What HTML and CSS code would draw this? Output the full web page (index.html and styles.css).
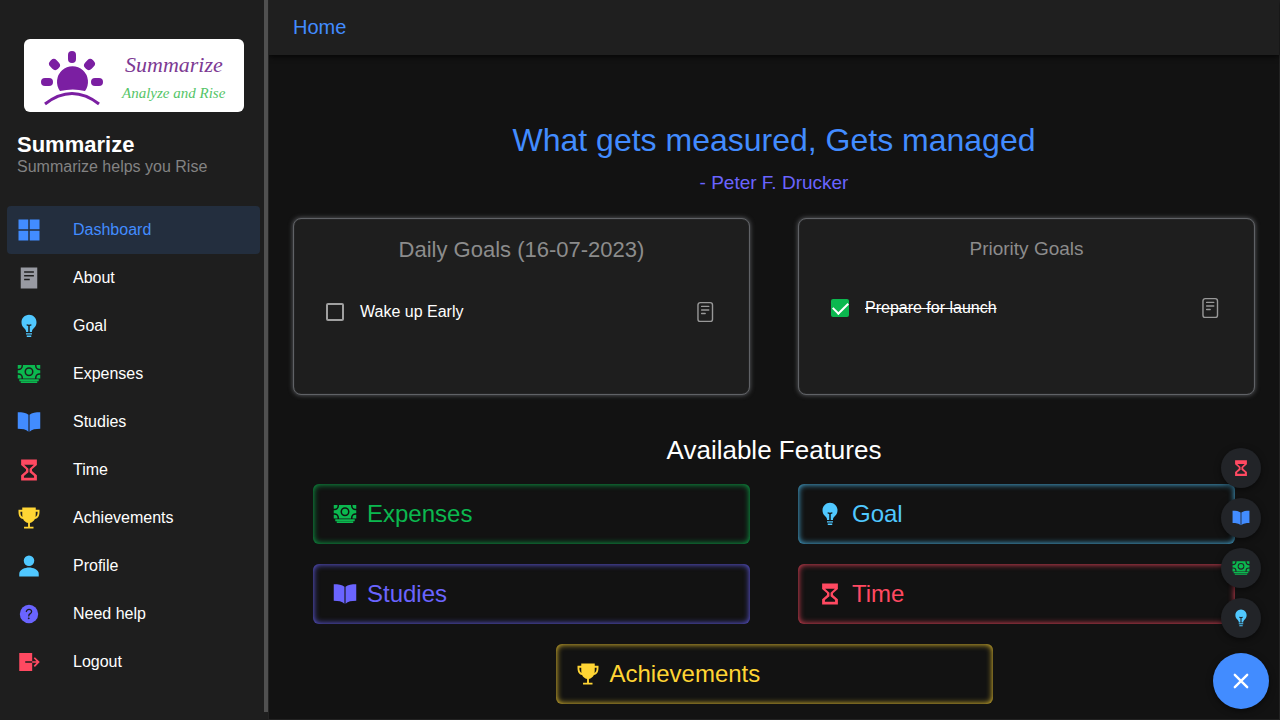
FILE: index.html
```html
<!DOCTYPE html>
<html lang="en">
<head>
<meta charset="utf-8">
<meta name="viewport" content="width=device-width, initial-scale=1">
<title>Summarize</title>
<link rel="stylesheet" href="styles.css">
</head>
<body>
<svg class="sprite" aria-hidden="true">
  <symbol id="grid" viewBox="0 0 512 512"><path d="M32 32h208v208H32zM272 32h208v208H272zM32 272h208v208H32zM272 272h208v208H272z"/></symbol>
  <symbol id="reader" viewBox="0 0 512 512"><path fill-rule="evenodd" d="M80 32h352v448H80zM152 112v32h208v-32zM152 192v32h208v-32zM152 272v32h120v-32z"/></symbol>
  <symbol id="note" viewBox="0 0 512 512"><g fill="none" stroke="currentColor" stroke-width="30" stroke-linecap="round"><rect x="106" y="56" width="310" height="400" rx="48"/><path d="M184 136h152M184 212h152M184 288h76"/></g></symbol>
  <symbol id="bulb" viewBox="0 0 512 512"><path fill-rule="evenodd" d="M256 16C165 18 96 88 96 175c0 52 20 87 49 119 27 30 47 50 47 74v16h48V256l-36-10 4-28 48 12 48-12 4 28-36 10v128h48v-16c0-24 20-44 47-74 29-32 49-67 49-119C416 87 347 18 256 16z"/><path d="M192 408h128v28H192zM208 460h96v32h-96z"/></symbol>
  <symbol id="cash" viewBox="0 0 512 512"><path d="M48 368h416v40H48zM80 416h352v32H80zM32 272H16v80h80v-16a64 64 0 0 0-64-64zM480 240h16v-64h-16a96 96 0 0 1-96-96V64H128v16a96 96 0 0 1-96 96H16v64h16a96 96 0 0 1 96 96v16h256v-16a96 96 0 0 1 96-96zm-224 64a96 96 0 1 1 96-96 96 96 0 0 1-96 96zM416 336v16h80v-80h-16a64 64 0 0 0-64 64zM480 144h16V64h-80v16a64 64 0 0 0 64 64zM96 80V64H16v80h16a64 64 0 0 0 64-64z"/><circle cx="256" cy="208" r="64"/></symbol>
  <symbol id="book" viewBox="0 0 512 512"><path d="M16 48c98 0 180 9 228 54v360c-50-49-130-62-228-62zM496 48c-98 0-180 9-228 54v360c50-49 130-62 228-62z"/></symbol>
  <symbol id="hourglass" viewBox="0 0 512 512"><path fill-rule="evenodd" d="M88 32h336v116l-104 92v36l104 92v112H88V368l104-92v-36L88 148zM152 144l92 84v76L148 384v36h216v-36l-96-80v-76l92-84z"/></symbol>
  <symbol id="trophy" viewBox="0 0 512 512"><path fill-rule="evenodd" d="M112 32h288v48h80v40c0 86-30 144-98 158-22 42-62 74-106 83v83h76v36H150v-36h86v-83c-48-9-88-41-106-83-68-14-98-72-98-158V80h80zM112 120H72c0 54 12 90 44 112-4-38-4-70-4-112zM400 120c0 42 0 74-4 112 32-22 44-58 44-112z"/></symbol>
  <symbol id="person" viewBox="0 0 512 512"><circle cx="256" cy="144" r="112"/><path d="M256 288c-82 0-208 42-208 136v56h416v-56c0-94-126-136-208-136z"/></symbol>
  <symbol id="help" viewBox="0 0 512 512"><circle cx="256" cy="256" r="196"/><g class="cut"><path d="M200 202s1-17 20-32c11-9 24-12 36-12 11 0 21 2 27 5 10 4 29 16 29 41 0 26-17 38-36 50s-25 28-25 42" fill="none" stroke-width="28" stroke-linecap="round"/><circle cx="250" cy="348" r="8" stroke-width="24"/></g></symbol>
  <symbol id="exit" viewBox="0 0 512 512"><path d="M48 64h276v174H176v36h148v174H48zM324 238h92l-60-60 26-26 104 104-104 104-26-26 60-60h-92z"/></symbol>
  <symbol id="close" viewBox="0 0 512 512"><path d="M124 124l264 264M388 124L124 388" fill="none" stroke="currentColor" stroke-width="50" stroke-linecap="round"/></symbol>
</svg>
<div class="app">
  <aside class="sidebar">
    <div class="sidebar-content">
      <svg class="logo" viewBox="0 0 220 73" role="img" aria-label="Summarize, Analyze and Rise">
        <g fill="#7b1fa2">
          <path d="M36 52a15.500 15.500 0 1 1 25 0q-12-3-25 0z"/>
          <rect x="44" y="12" width="8" height="12" rx="4"/>
          <rect x="17" y="39" width="12" height="8" rx="4"/>
          <rect x="67" y="39" width="12" height="8" rx="4"/>
          <rect x="26" y="20" width="9" height="11" rx="4" transform="rotate(-45 30.500 25.500)"/>
          <rect x="61" y="20" width="9" height="11" rx="4" transform="rotate(45 65.500 25.500)"/>
        </g>
        <path d="M21 65q27-21 54 0" fill="none" stroke="#7b1fa2" stroke-width="3"/>
        <text class="logo-name" x="101" y="33">Summarize</text>
        <text class="logo-tag" x="98" y="59">Analyze and Rise</text>
      </svg>
      <h2 class="brand">Summarize</h2>
      <p class="brand-note">Summarize helps you Rise</p>
      <nav class="menu">
        <a class="item active" href="#"><svg class="icon blue"><use href="#grid"/></svg>Dashboard</a>
        <a class="item" href="#"><svg class="icon gray"><use href="#reader"/></svg>About</a>
        <a class="item" href="#"><svg class="icon sky"><use href="#bulb"/></svg>Goal</a>
        <a class="item" href="#"><svg class="icon green"><use href="#cash"/></svg>Expenses</a>
        <a class="item" href="#"><svg class="icon blue"><use href="#book"/></svg>Studies</a>
        <a class="item" href="#"><svg class="icon red"><use href="#hourglass"/></svg>Time</a>
        <a class="item" href="#"><svg class="icon yellow"><use href="#trophy"/></svg>Achievements</a>
        <a class="item" href="#"><svg class="icon sky"><use href="#person"/></svg>Profile</a>
        <a class="item" href="#"><svg class="icon violet"><use href="#help"/></svg>Need help</a>
        <a class="item" href="#"><svg class="icon red"><use href="#exit"/></svg>Logout</a>
      </nav>
    </div>
    <div class="scroll-thumb"></div>
  </aside>
  <div class="page">
    <header class="toolbar"><h1 class="page-title">Home</h1></header>
    <main class="content">
      <h2 class="quote">What gets measured, Gets managed</h2>
      <p class="author">- Peter F. Drucker</p>
      <div class="goals">
        <section class="card">
          <h3 class="card-title large">Daily Goals (16-07-2023)</h3>
          <div class="goal">
            <input class="check" type="checkbox" id="wake">
            <label class="goal-name" for="wake">Wake up Early</label>
            <button class="note-button" aria-label="Notes"><svg class="icon"><use href="#note"/></svg></button>
          </div>
        </section>
        <section class="card">
          <h3 class="card-title">Priority Goals</h3>
          <div class="goal">
            <input class="check" type="checkbox" id="launch" checked>
            <label class="goal-name" for="launch">Prepare for launch</label>
            <button class="note-button" aria-label="Notes"><svg class="icon"><use href="#note"/></svg></button>
          </div>
        </section>
      </div>
      <h2 class="section-title">Available Features</h2>
      <div class="features">
        <a class="feature green" href="#"><svg class="icon"><use href="#cash"/></svg>Expenses</a>
        <a class="feature sky" href="#"><svg class="icon"><use href="#bulb"/></svg>Goal</a>
        <a class="feature violet" href="#"><svg class="icon"><use href="#book"/></svg>Studies</a>
        <a class="feature red" href="#"><svg class="icon"><use href="#hourglass"/></svg>Time</a>
        <a class="feature yellow wide" href="#"><svg class="icon"><use href="#trophy"/></svg>Achievements</a>
      </div>
    </main>
  </div>
</div>
<div class="fab">
  <button class="fab-item red" aria-label="Time"><svg class="icon small"><use href="#hourglass"/></svg></button>
  <button class="fab-item blue" aria-label="Studies"><svg class="icon small"><use href="#book"/></svg></button>
  <button class="fab-item green" aria-label="Expenses"><svg class="icon small"><use href="#cash"/></svg></button>
  <button class="fab-item sky" aria-label="Goal"><svg class="icon small"><use href="#bulb"/></svg></button>
  <button class="fab-main" aria-label="Close"><svg class="icon"><use href="#close"/></svg></button>
</div>
</body>
</html>
```

FILE: styles.css
```css
* { box-sizing: border-box; margin: 0; }
body {
  background: #121212;
  color: #fff;
  font: 16px/20px "Liberation Sans", Arial, sans-serif;
}
a { color: inherit; text-decoration: none; }
button { border: 0; padding: 0; background: none; color: inherit; cursor: pointer; }
.sprite { position: absolute; width: 0; height: 0; }
.icon { display: block; flex: none; width: 24px; height: 24px; fill: currentColor; }
.icon.small { width: 18px; height: 18px; }
.cut { fill: #1f1f1f; stroke: #1f1f1f; }

.blue { color: #428cff; }
.gray { color: #989aa2; }
.sky { color: #50c8ff; }
.green { color: #0bb84f; }
.red { color: #ff4961; }
.yellow { color: #ffd534; }
.violet { color: #6a64ff; }

.app { display: flex; height: 100vh; overflow: hidden; }
.sidebar {
  position: relative;
  z-index: 1;
  display: flex;
  flex: none;
  width: 269px;
  background: #1e1e1e;
  border-right: 1px solid #232323;
}
.sidebar-content { flex: 1; padding: 39px 4px 0 7px; }
.scroll-thumb { width: 4px; margin-bottom: 8px; background: #505050; }
.logo {
  display: block;
  width: 220px;
  margin-left: 17px;
  background: #fff;
  border-radius: 6px;
}
.logo-name { font: italic 22px "Liberation Serif", serif; fill: #7d3a93; }
.logo-tag { font: italic 15px "Liberation Serif", serif; fill: #55c568; }
.brand { margin: 20px 10px 0; font-size: 22px; line-height: 26px; }
.brand-note { padding: 0 10px; line-height: 18px; color: #838383; }
.menu { margin-top: 30px; }
.item {
  display: flex;
  align-items: center;
  gap: 32px;
  height: 48px;
  padding: 0 10px;
  border-radius: 4px;
}
.item.active { background: #232e3e; color: #428cff; }

.page {
  flex: 1;
  min-width: 0;
  display: flex;
  flex-direction: column;
  border: solid #222;
  border-width: 0 1px 1px 0;
}
.toolbar {
  padding: 15px 24px 16px;
  background: #1f1f1f;
  box-shadow: 0 2px 5px #000000b0;
}
.page-title { font-size: 20px; font-weight: 400; line-height: 24px; color: #428cff; }
.content { flex: 1; padding: 65px 24px 0; }
.quote { font-size: 32px; font-weight: 400; line-height: 40px; text-align: center; color: #428cff; }
.author { margin-top: 11px; font-size: 19px; line-height: 24px; text-align: center; color: #6a64ff; }
.goals { display: grid; grid-template-columns: 1fr 1fr; gap: 48px; margin-top: 23px; }
.card {
  min-height: 177px;
  padding: 17px 32px;
  background: #1e1e1e;
  border: 1px solid #606266;
  border-radius: 8px;
  box-shadow: 0 0 5px #606266, inset 0 0 1px #606266;
}
.card-title { font-size: 19px; font-weight: 400; line-height: 26px; text-align: center; color: #8c8c8c; }
.card-title.large { font-size: 22px; line-height: 28px; }
.goal { display: flex; align-items: center; margin-top: 34px; }
.large + .goal { margin-top: 36px; }
.check {
  appearance: none;
  width: 18px;
  height: 18px;
  margin: 0 16px 0 0;
  border: 2px solid #a0a0a0;
  border-radius: 2px;
}
.check:checked { display: grid; place-items: center; border: 0; background: #0bb84f; }
.check:checked::before {
  content: "";
  width: 13px;
  height: 7px;
  margin-bottom: 4px;
  border: solid #fff;
  border-width: 0 0 2px 2px;
  transform: rotate(-45deg);
}
.check:checked + .goal-name { text-decoration: line-through; }
.goal-name { flex: 1; }
.note-button { color: #989898; }

.section-title { margin-top: 39px; font-size: 26px; font-weight: 400; line-height: 32px; text-align: center; }
.features {
  display: grid;
  grid-template-columns: 1fr 1fr;
  gap: 20px 48px;
  padding: 18px 20px 0;
}
.feature {
  display: flex;
  align-items: center;
  gap: 10px;
  height: 60px;
  padding: 0 20px;
  border-radius: 6px;
  box-shadow: inset 0 0 6px currentColor;
  font-size: 24px;
}
.feature.wide { grid-column: span 2; justify-self: center; width: calc(50% - 24px); }

.fab {
  position: fixed;
  z-index: 2;
  right: 11px;
  bottom: 11px;
  display: flex;
  flex-direction: column;
  align-items: center;
  gap: 10px;
}
.fab-item, .fab-main {
  display: grid;
  place-items: center;
  width: 40px;
  height: 40px;
  border-radius: 50%;
  background: #222428;
  box-shadow: 0 2px 6px #00000080;
}
.fab-main { width: 56px; height: 56px; margin-top: 5px; background: #428cff; color: #fff; }
```
